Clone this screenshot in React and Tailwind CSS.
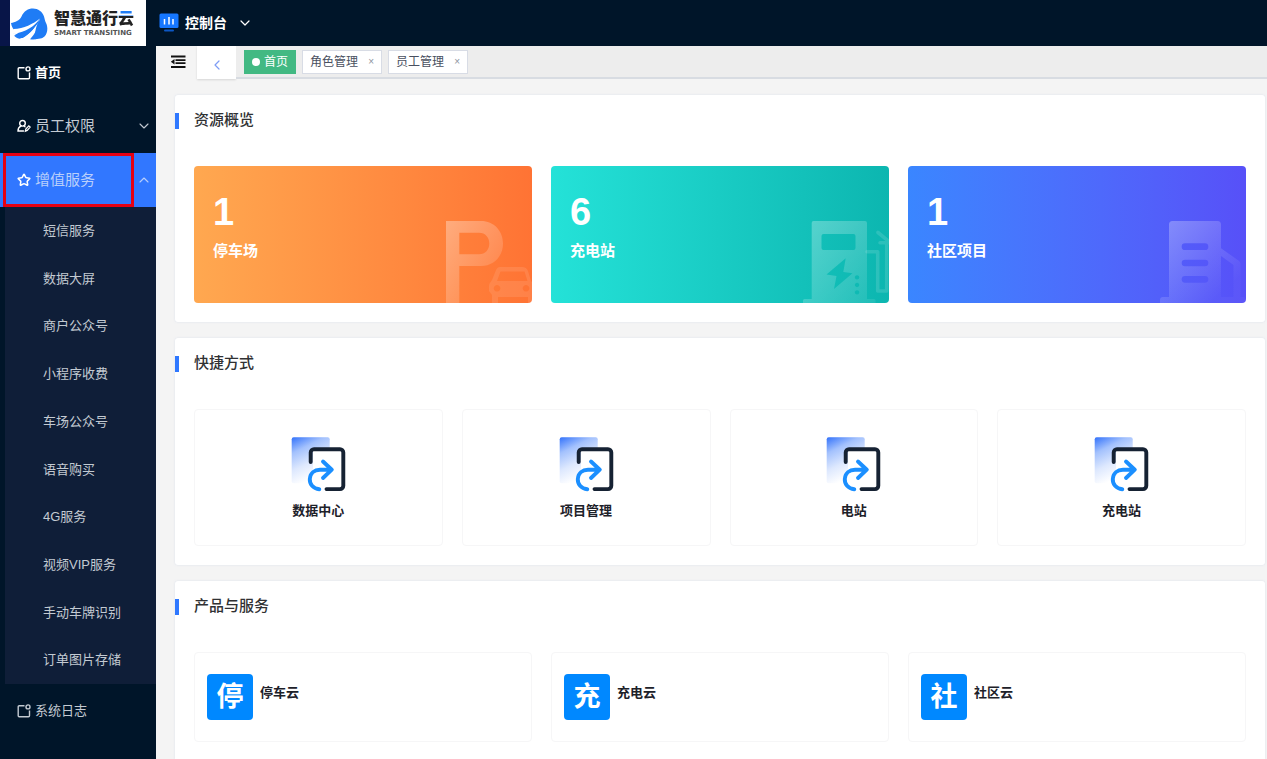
import React from "react";
import { ChevronDown, ChevronUp, ChevronLeft, Star } from "lucide-react";

const services = [
  "短信服务",
  "数据大屏",
  "商户公众号",
  "小程序收费",
  "车场公众号",
  "语音购买",
  "4G服务",
  "视频VIP服务",
  "手动车牌识别",
  "订单图片存储",
];

function BoxIcon() {
  return (
    <svg className="size-[14px] shrink-0" viewBox="0 0 14 14" fill="none" stroke="currentColor" strokeWidth="1.4">
      <path d="M7.5 1.8H2.2a1 1 0 0 0-1 1v9a1 1 0 0 0 1 1h9.300a1 1 0 0 0 1-1V6.500" />
      <circle cx="11" cy="2.900" r="2" />
    </svg>
  );
}

function StaffIcon() {
  return (
    <svg className="size-[14px] shrink-0 text-white" viewBox="0 0 14 14" fill="none" stroke="currentColor" strokeWidth="1.4" strokeLinecap="round">
      <circle cx="5.500" cy="4.300" r="2.800" />
      <path d="M4 7.200C2 8 1 9.500 1 12h5.500M7.200 7.200l.8.6" />
      <path d="M8.300 12.300l.5-2.300 3-3.200 1.400 1.300-3 3.300z" strokeWidth="1.200" />
    </svg>
  );
}

function LogoMark() {
  return (
    <svg className="h-[33px] w-[38px] shrink-0" viewBox="0 0 38 33">
      <path
        fill="#1f7cf5"
        d="M1 16C5 15.500 9.500 13.500 11.500 9.500 14 4 18 1.500 23 1.500c5 0 9.500 3 11 8 .8 2.500.8 4 2 6.500 2.300 4.500 1.500 10.500-1.500 13.500-2 1.800-6 3-13 2.800L9 30.500C6.500 29.500 4.500 28.500 3.500 26.500 5 26 6 25.500 6.500 25 3.500 23 1.500 20 1 16z"
      />
      <path fill="#fff" d="M3.500 22C14 21.500 23 17 30 11.500 25 19 16 25 3.500 27z" />
      <path fill="#fff" d="M30.500 11.500C26.500 17 25 23 24.500 33H9C17 29.500 25 21.500 30.500 11.500z" />
      <path fill="#fff" d="M0 27L9 25.500 4 28.500 8.500 31 16 33H0z" />
      <path fill="#1f7cf5" d="M4 28.500C13 27.500 22 22.500 29 13.500 24.500 22 17.500 29.500 9.500 31.800 7 31 5 30 4 28.500z" />
      <path fill="#1f7cf5" d="M30.500 12C33 18 31 26 25.500 32.300 23.500 32.600 21.500 32.300 20 32.200 25 27 28.500 20 30.500 12z" />
    </svg>
  );
}

function ParkingArt() {
  return (
    <svg className="absolute right-0 bottom-0 h-[82px] w-[86px]" viewBox="0 0 86 82">
      <defs>
        <linearGradient id="art-parking" x1="0" y1="0" x2="1" y2="1">
          <stop offset="0" stopColor="#fff" stopOpacity=".34" />
          <stop offset="1" stopColor="#fff" stopOpacity=".06" />
        </linearGradient>
      </defs>
      <path
        fill="url(#art-parking)"
        fillRule="evenodd"
        d="M0 0H35C48 0 57 10 57 22.500S48 45 35 45H13.300V82H0zM13.300 11.700V33.300H33C39.500 33.300 43.300 28.500 43.300 22.500S39.500 11.700 33 11.700z"
      />
      <path
        fill="#fff"
        fillOpacity=".1"
        fillRule="evenodd"
        d="M54 46H76C79 46 81 47.500 82 50L85 60 86 61V82H82V76H52V82H46V74L43 70V65C43 62 45 61 46 59L50 49C51 47 52 46 54 46zM54.500 50.500L51 60H81.500L78.500 50.500zM51 64a3.300 3.300 0 1 0 .1 0zM80 64a3.300 3.300 0 1 0 .1 0z"
      />
    </svg>
  );
}

function ChargerArt() {
  return (
    <svg className="absolute right-0 bottom-0 h-[82px] w-[86px]" viewBox="0 0 86 82">
      <defs>
        <linearGradient id="art-charger" x1="0" y1="0" x2="1" y2="1">
          <stop offset="0" stopColor="#fff" stopOpacity=".3" />
          <stop offset="1" stopColor="#fff" stopOpacity=".08" />
        </linearGradient>
      </defs>
      <path
        fill="url(#art-charger)"
        fillRule="evenodd"
        d="M10.500 0H62a2 2 0 0 1 2 2V78h7a1.500 1.500 0 0 1 1.500 1.500V82H0V79.500A1.500 1.500 0 0 1 1.500 78H8.700V2a2 2 0 0 1 1.800-2zM20.500 13a2 2 0 0 0-2 2V27a2 2 0 0 0 2 2H50.500a2 2 0 0 0 2-2V15a2 2 0 0 0-2-2zM42.700 37.300L23.500 53.500 33.500 55 31 68 49.500 52.300 40.300 51zM54 54.200a2.200 2.200 0 1 0 .1 0zM54 61.800a2.200 2.200 0 1 0 .1 0zM54 69.200a2.200 2.200 0 1 0 .1 0z"
      />
      <path d="M64 30.700H74.700V70H83.700V22M77 21.700H86M75 11.500L86 20.500" fill="none" stroke="#fff" strokeOpacity=".13" strokeWidth="3.600" strokeLinecap="round" strokeLinejoin="round" />
    </svg>
  );
}

function BuildingArt() {
  return (
    <svg className="absolute right-0 bottom-0 h-[82px] w-[86px]" viewBox="0 0 86 82">
      <defs>
        <linearGradient id="art-building" x1="0" y1="0" x2="1" y2="1">
          <stop offset="0" stopColor="#fff" stopOpacity=".3" />
          <stop offset=".8" stopColor="#fff" stopOpacity=".03" />
        </linearGradient>
      </defs>
      <path
        fill="url(#art-building)"
        fillRule="evenodd"
        d="M12.500 0H57.500a3.500 3.500 0 0 1 3.500 3.500V27.300L78.500 39.500a4 4 0 0 1 2 3.500V76H83a3 3 0 0 1 3 3v3H0V79a3 3 0 0 1 3-3H9V3.500A3.500 3.500 0 0 1 12.500 0zM61 35V76H73.500V44zM25 22.300a3.300 3.300 0 0 0 0 6.700H45a3.300 3.300 0 0 0 0-6.700zM25 38.700a3.300 3.300 0 0 0 0 6.600H45a3.300 3.300 0 0 0 0-6.600zM25 55a3.300 3.300 0 0 0 0 6.700H45a3.300 3.300 0 0 0 0-6.700z"
      />
    </svg>
  );
}

function ShortcutIcon({ id }) {
  return (
    <svg className="size-[55px]" viewBox="0 0 55 55" fill="none" strokeLinecap="round">
      <defs>
        <linearGradient id={id} gradientUnits="userSpaceOnUse" x1="4" y1="0" x2="24" y2="40">
          <stop offset="0" stopColor="#3b78fb" />
          <stop offset=".3" stopColor="#a3c1fd" />
          <stop offset=".65" stopColor="#dde8fe" />
          <stop offset="1" stopColor="#fff" />
        </linearGradient>
      </defs>
      <rect x=".7" y=".3" width="38" height="46" rx="2" fill={`url(#${id})`} />
      <path d="M22 12.500H50a2.300 2.300 0 0 1 2.300 2.300V49.700A2.300 2.300 0 0 1 50 52H22z" fill="#fff" />
      <path d="M19.700 25V15.500a3.300 3.300 0 0 1 3.300-3.300H49a3.300 3.300 0 0 1 3.300 3.300V48.800A3.300 3.300 0 0 1 49 52.100H35.500" stroke="#162233" strokeWidth="3.900" />
      <path d="M28.300 52.200C22 51.500 18.500 47 18.800 42 19.200 36 23.500 32.800 29 32.800H40M32 24.500l8.800 8.200L32 41" stroke="#1b8fff" strokeWidth="3.900" strokeLinejoin="round" />
    </svg>
  );
}

const overview = [
  { count: 1, label: "停车场", tone: "from-[#ffa850] to-[#ff7334]", Art: ParkingArt },
  { count: 6, label: "充电站", tone: "from-[#24e2d8] to-[#0cb6b0]", Art: ChargerArt },
  { count: 1, label: "社区项目", tone: "from-[#3a86ff] to-[#5750f8]", Art: BuildingArt },
];
const shortcuts = ["数据中心", "项目管理", "电站", "充电站"];
const products = [
  ["停", "停车云"],
  ["充", "充电云"],
  ["社", "社区云"],
];

function Panel({ title, className = "", children }) {
  return (
    <section className={`rounded-[3px] bg-white pb-[19px] shadow-[0_0_2px_rgba(200,210,230,0.6)] ${className}`}>
      <div className="flex h-[51px] items-center">
        <span className="h-4 w-1 bg-[#2f78ff]" />
        <h2 className="pl-[15px] text-[15px] font-medium text-[#303133]">{title}</h2>
      </div>
      <div className="px-[19px] pt-[20px]">{children}</div>
    </section>
  );
}

function Tab({ children }) {
  return (
    <div className="flex h-6 items-center border border-[#d8dce5] bg-white px-[7px] text-xs text-[#495060]">
      <a href="#tab">{children}</a>
      <button type="button" aria-label={`关闭${children}`} className="w-4 pl-1 text-right text-[10px] text-[#8d939e]">
        ×
      </button>
    </div>
  );
}

export default function App() {
  return (
    <div className="flex h-screen flex-col overflow-hidden bg-[#f4f4f4] font-['Liberation_Sans','Noto_Sans_CJK_SC',sans-serif]">
      <header className="flex h-[46px] shrink-0 items-center bg-[#001529]">
        <span className="h-full w-[10px] bg-[#081548]" />
        <a href="#home" className="flex h-full w-[136px] items-center bg-white">
          <LogoMark />
          <span className="flex flex-col pl-[6px]">
            <span className="text-[16px] leading-[20px] font-black whitespace-nowrap text-[#222]">
              智慧通行<span className="bg-linear-to-b from-[#1f7cf5] from-35% to-[#222] to-35% bg-clip-text text-transparent">云</span>
            </span>
            <span className="font-['DejaVu_Sans'] text-[7px] leading-[9px] font-bold whitespace-nowrap text-[#555]">SMART TRANSITING</span>
          </span>
        </a>
        <button type="button" className="flex items-center pl-[13px] text-white">
          <svg className="h-[20px] w-[20px]" viewBox="0 0 20 20">
            <rect x=".5" y=".5" width="19" height="14.500" rx="1.500" fill="#1677ff" />
            <rect x="5" y="16.500" width="10" height="2" rx="1" fill="#0c57c4" />
            <path d="M5.500 6v5.500M10 4v7.500M14 6v5.500" stroke="#fff" strokeWidth="1.500" />
          </svg>
          <span className="pl-[6px] text-[14px] leading-5 font-bold">控制台</span>
          <ChevronDown className="ml-[10px] size-4" strokeWidth={1.8} />
        </button>
      </header>

      <div className="flex min-h-0 flex-1">
        <nav className="w-[156px] shrink-0 bg-[#001529] text-[#c3cad2]">
          <a href="#index" className="flex h-[53px] items-center gap-1 pl-[17px] text-[13px] font-bold text-white">
            <BoxIcon />
            首页
          </a>
          <button type="button" className="flex h-[54px] w-full items-center gap-1 pr-1 pl-[17px] text-[15px]">
            <StaffIcon />
            员工权限
            <ChevronDown className="ml-auto size-4" strokeWidth={1.6} />
          </button>
          <div className="relative">
            <button type="button" className="flex h-[54px] w-full items-center gap-1 bg-[#3177ff] pr-1 pl-[17px] text-[15px] text-[#b9cffb]">
              <Star className="size-[14px] text-white" strokeWidth={2.6} />
              增值服务
              <ChevronUp className="ml-auto size-4" strokeWidth={1.6} />
            </button>
            <span className="pointer-events-none absolute inset-y-0 left-[3px] w-[131px] border-3 border-[#e60012]" />
          </div>
          <ul className="ml-[5px] grid h-[477px] grid-rows-10 bg-[#0f1e38] text-[13px]">
            {services.map((s) => (
              <li key={s} className="flex items-center pl-[38px]">
                <a href="#service">{s}</a>
              </li>
            ))}
          </ul>
          <a href="#log" className="flex h-[53px] items-center gap-1 pl-[17px] text-[13px]">
            <BoxIcon />
            系统日志
          </a>
        </nav>

        <main className="flex min-w-0 flex-1 flex-col">
          <div className="flex h-[33px] shrink-0">
            <button type="button" aria-label="折叠菜单" className="flex w-[41px] items-start justify-center pt-2 pl-[3px]">
              <svg className="size-[16px]" viewBox="0 0 16 16" fill="none" stroke="#111" strokeWidth="2.200">
                <path d="M1 2.500H15.500M1 13H15.500" />
                <path d="M5.500 6.200H15.500M5.500 9.200H15.500" strokeWidth="1.800" />
                <path d="M4.500 5L.8 7.700 4.500 10.400z" fill="#111" stroke="none" />
              </svg>
            </button>
            <button type="button" aria-label="返回" className="flex w-[39px] items-center justify-center bg-white pt-1 text-[#7d9cf5] shadow-[0_1px_2px_rgba(0,0,0,0.12)]">
              <ChevronLeft className="size-4" strokeWidth={1.8} />
            </button>
            <div className="flex flex-1 items-start gap-[6px] border-b-2 border-[#d8dce2] bg-[#ededed] px-2 pt-1">
              <a href="#tab" className="flex h-6 items-center gap-1 bg-[#42b983] px-2 text-xs text-white">
                <span className="size-2 rounded-full bg-white" />
                首页
              </a>
              <Tab>角色管理</Tab>
              <Tab>员工管理</Tab>
            </div>
          </div>

          <div className="flex min-h-0 flex-1 flex-col gap-4 overflow-hidden pt-[16px] pr-[2px] pl-[19px]">
            <Panel title="资源概览" className="shrink-0">
              <div className="grid grid-cols-3 gap-[19px]">
                {overview.map(({ count, label, tone, Art }) => (
                  <a key={label} href="#overview" className={`relative block h-[137px] overflow-hidden rounded-[4px] bg-linear-to-r px-[19px] pt-[24px] text-white ${tone}`}>
                    <strong className="block text-[38px] leading-[44px]">{count}</strong>
                    <span className="block pt-[5px] text-[15px] leading-6 font-bold">{label}</span>
                    <Art />
                  </a>
                ))}
              </div>
            </Panel>

            <Panel title="快捷方式" className="shrink-0">
              <div className="grid grid-cols-4 gap-[19px]">
                {shortcuts.map((s, i) => (
                  <a key={s} href="#shortcut" className="flex h-[137px] flex-col items-center gap-[9px] rounded-[4px] border border-[#f6f6f7] pt-[27px] text-[13px] leading-5 font-bold text-[#1d2129]">
                    <ShortcutIcon id={`shortcut-${i}`} />
                    {s}
                  </a>
                ))}
              </div>
            </Panel>

            <Panel title="产品与服务" className="shrink-0">
              <div className="grid grid-cols-3 gap-[19px]">
                {products.map(([mark, name]) => (
                  <a key={name} href="#product" className="flex h-[90px] items-start gap-[7px] rounded-[4px] border border-[#f6f6f7] px-[12px] pt-[21px] text-[13px] font-bold text-[#1d2129]">
                    <span className="flex size-[46px] items-center justify-center rounded-[4px] bg-[#0088ff] text-[27px] text-white">{mark}</span>
                    <span className="pt-[9px] leading-5">{name}</span>
                  </a>
                ))}
              </div>
            </Panel>
          </div>
        </main>
      </div>
    </div>
  );
}
